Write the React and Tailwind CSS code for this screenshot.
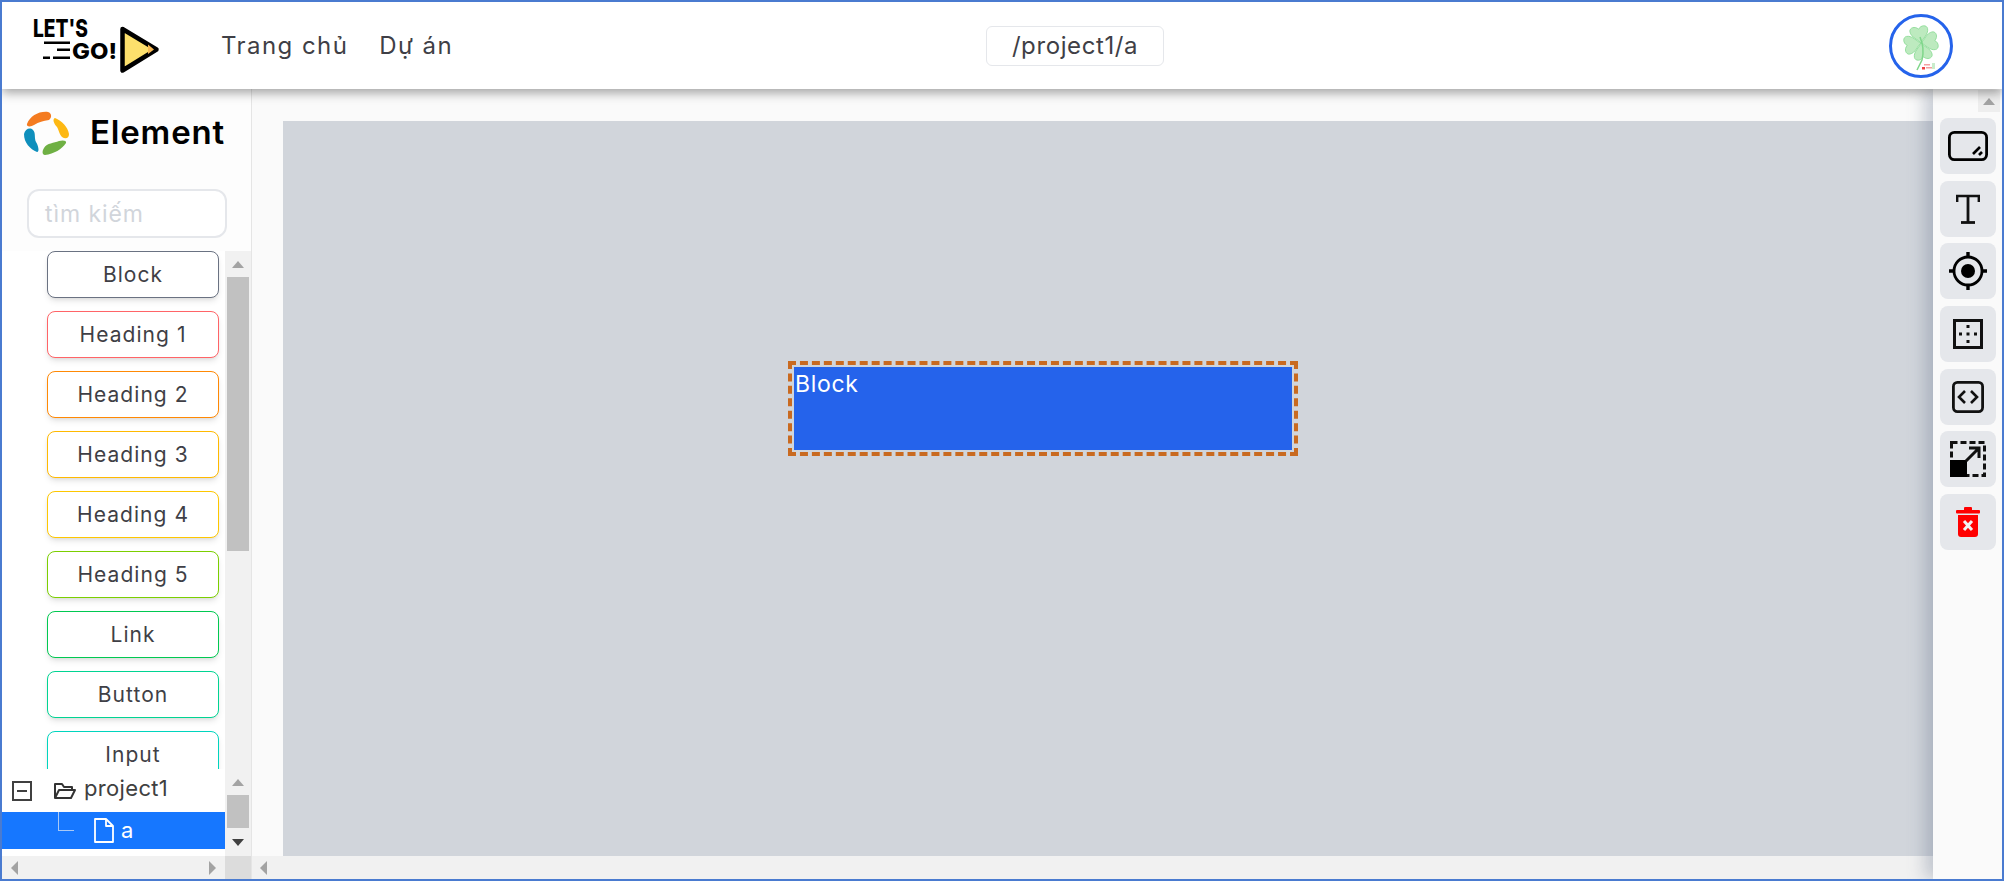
import React from 'react';

const ELEMENTS = [
  { name: 'Block', border: 'border-gray-500' },
  { name: 'Heading 1', border: 'border-red-400' },
  { name: 'Heading 2', border: 'border-orange-400' },
  { name: 'Heading 3', border: 'border-amber-400' },
  { name: 'Heading 4', border: 'border-yellow-400' },
  { name: 'Heading 5', border: 'border-lime-500' },
  { name: 'Link', border: 'border-green-500' },
  { name: 'Button', border: 'border-emerald-400' },
  { name: 'Input', border: 'border-teal-400' },
];

function Arrow({ dir, color = 'border-b-[#a3a3a3]' }) {
  if (dir === 'up') return <div className={`w-0 h-0 border-x-[6px] border-x-transparent border-b-[7px] ${color}`} />;
  if (dir === 'down') return <div className="w-0 h-0 border-x-[6px] border-x-transparent border-t-[7px] border-t-[#404040]" />;
  if (dir === 'left') return <div className="w-0 h-0 border-y-[7px] border-y-transparent border-r-[7px] border-r-[#a3a3a3]" />;
  return <div className="w-0 h-0 border-y-[7px] border-y-transparent border-l-[7px] border-l-[#a3a3a3]" />;
}

function Logo() {
  return (
    <svg width="130" height="64" viewBox="0 0 130 64" className="shrink-0">
      <text x="1" y="24.5" fontFamily="Inter, sans-serif" fontWeight="800" fontSize="24" textLength="55" lengthAdjust="spacingAndGlyphs" fill="#000">LET'S</text>
      <rect x="12" y="29.5" width="26" height="2.5" fill="#000" />
      <rect x="25" y="36.5" width="13" height="2.5" fill="#000" />
      <rect x="11" y="44.5" width="7" height="2.5" fill="#000" />
      <rect x="21" y="44.5" width="17" height="2.5" fill="#000" />
      <text x="40" y="46.5" fontFamily="Inter, sans-serif" fontWeight="800" fontSize="22" textLength="45" lengthAdjust="spacingAndGlyphs" fill="#000">GO!</text>
      <path d="M90.5 17 L124.5 37.5 L90.5 58.5 Z" fill="#fde06c" stroke="#000" strokeWidth="4.5" strokeLinejoin="round" />
      <path d="M116 32.5 L122 37.5 L116 42 Z" fill="#f7b955" />
    </svg>
  );
}

function ElementLogo() {
  return (
    <svg width="48" height="46" viewBox="0 0 48 46" className="shrink-0">
      <path d="M4 14 C7 6 16 1 25 2 C29 3 29 8 26 10 C20 11 16 12 11 15 C8 17 3 17 4 14Z" fill="#f47b20" />
      <path d="M32 8 C39 11 45 17 46 24 C46 29 42 29 39 27 C36 24 36 20 34 17 C31 14 29 9 32 8Z" fill="#fdb813" />
      <path d="M43 33 C39 39 31 44 22 45 C19 45 19 41 21 38 C24 33 31 33 36 31 C39 30 44 30 43 33Z" fill="#6fb044" />
      <path d="M14 42 C7 39 1 33 1 24 C2 19 7 17 10 20 C13 23 11 28 13 32 C15 35 17 42 14 42Z" fill="#0f8fbc" />
    </svg>
  );
}

function Clover() {
  const leaf = 'M0 0 C-2 -4 -9 -7 -9 -13 C-9 -17 -3 -18 0 -14 C3 -18 9 -17 9 -13 C9 -7 2 -4 0 0Z';
  return (
    <svg width="56" height="56" viewBox="0 0 56 56">
      <g transform="translate(28 25)" fill="#bdeabf" stroke="#8adb94" strokeWidth="0.8">
        <path d={leaf} transform="rotate(-10)" />
        <path d={leaf} transform="rotate(80)" />
        <path d={leaf} transform="rotate(170)" />
        <path d={leaf} transform="rotate(260)" />
      </g>
      <path d="M27 19 C30 26 31 34 29 42 L24 52" fill="none" stroke="#7fd68a" strokeWidth="1.5" />
      <rect x="31" y="46" width="6" height="1.5" fill="#f4a0a0" />
      <rect x="29" y="49" width="3" height="2.5" fill="#ef4444" />
      <rect x="33" y="49" width="6" height="1.5" fill="#f4a0a0" />
      <rect x="39" y="45" width="3" height="6" fill="#c9eccb" />
    </svg>
  );
}

function Tool({ children }) {
  return <button className="w-14 h-14 shrink-0 rounded-lg bg-gray-200 flex items-center justify-center">{children}</button>;
}

function ToolIcons() {
  return (
    <>
      <Tool>
        <svg width="40" height="30" viewBox="0 0 40 30" fill="none" stroke="#000">
          <rect x="1.4" y="1.4" width="37.2" height="27.2" rx="5" strokeWidth="2.8" />
          <path d="M25 23 L32 16" strokeWidth="2.6" />
          <path d="M31 24 L34 21" strokeWidth="2.6" />
        </svg>
      </Tool>
      <Tool>
        <svg width="24" height="30" viewBox="0 0 24 30" fill="none" stroke="#111" strokeWidth="2.4">
          <path d="M1.2 8 V2 H22.8 V8" />
          <path d="M12 2 V28" strokeWidth="2.8" />
          <path d="M5 28.5 H19" strokeWidth="2.8" />
        </svg>
      </Tool>
      <Tool>
        <svg width="38" height="38" viewBox="0 0 38 38" fill="none" stroke="#000">
          <circle cx="19" cy="19" r="14" strokeWidth="2.8" />
          <circle cx="19" cy="19" r="7" fill="#000" stroke="none" />
          <path d="M19 0 V6 M19 32 V38 M0 19 H6 M32 19 H38" strokeWidth="3.4" />
        </svg>
      </Tool>
      <Tool>
        <svg width="30" height="30" viewBox="0 0 30 30" fill="none">
          <rect x="1.5" y="1.5" width="27" height="27" stroke="#111" strokeWidth="3" />
          <g fill="#111">
            <rect x="13.5" y="6" width="3" height="3" />
            <rect x="13.5" y="13.5" width="3" height="3" />
            <rect x="13.5" y="21" width="3" height="3" />
            <rect x="6" y="13.5" width="3" height="3" />
            <rect x="21" y="13.5" width="3" height="3" />
          </g>
        </svg>
      </Tool>
      <Tool>
        <svg width="32" height="32" viewBox="0 0 32 32" fill="none" stroke="#111">
          <rect x="1.4" y="1.4" width="29.2" height="29.2" rx="4" strokeWidth="2.8" />
          <path d="M13 10 L7 16 L13 22 M19 10 L25 16 L19 22" strokeWidth="2.6" />
        </svg>
      </Tool>
      <Tool>
        <svg width="36" height="36" viewBox="0 0 36 36" fill="none">
          <rect x="1.5" y="1.5" width="33" height="33" stroke="#111" strokeWidth="3" strokeDasharray="6 3" />
          <rect x="0" y="19" width="17" height="17" fill="#000" />
          <path d="M16 20 L29 7 M19 7 H29 V17" stroke="#111" strokeWidth="3" />
        </svg>
      </Tool>
      <Tool>
        <svg width="24" height="30" viewBox="0 0 24 30">
          <rect x="0" y="3" width="24" height="3.5" rx="1" fill="#ff0000" />
          <rect x="8" y="0" width="8" height="4" rx="1" fill="#ff0000" />
          <path d="M2 8 H22 V27 Q22 30 19 30 H5 Q2 30 2 27 Z" fill="#ff0000" />
          <path d="M8 14 L16 23 M16 14 L8 23" stroke="#f2f2f2" strokeWidth="3" />
        </svg>
      </Tool>
    </>
  );
}

function Sidebar() {
  return (
    <aside className="w-[250px] shrink-0 flex flex-col bg-white border-r border-[#e5e5e5]">
      <div className="h-[162px] shrink-0 bg-[#fdfdfd]">
        <div className="flex items-center h-[87px] pl-[21px]">
          <ElementLogo />
          <h2 className="ml-[19px] text-[33px] font-semibold text-black tracking-[0.025em]">Element</h2>
        </div>
        <div className="ml-[25px] mt-[13px] w-[200px] h-[49px] rounded-xl border-2 border-gray-200 bg-white pl-[16px] pt-[2px] flex items-center text-[23px] text-[#d1d5db] tracking-[0.04em]">
          tìm kiếm
        </div>
      </div>
      <div className="flex-1 min-h-0 flex overflow-hidden">
        <div className="w-[223px] shrink-0 flex flex-col gap-[13px] pl-[45px] pr-[6px] overflow-hidden">
          {ELEMENTS.map((el) => (
            <button
              key={el.name}
              className={`w-[172px] h-[47px] shrink-0 rounded-lg border bg-white shadow-md text-[21px] text-[#3f3f46] tracking-[0.05em] ${el.border}`}
            >
              {el.name}
            </button>
          ))}
        </div>
        <div className="w-[26px] shrink-0 bg-[#f1f1f1] flex flex-col items-center">
          <div className="h-[26px] flex items-center justify-center"><Arrow dir="up" /></div>
          <div className="w-[22px] h-[274px] bg-[#c1c1c1]" />
        </div>
      </div>
      <div className="h-[87px] shrink-0 flex bg-white">
        <div className="w-[223px] shrink-0">
          <div className="h-[43px] flex items-center text-[22px] text-[#404040]">
            <div className="ml-[10px] w-[20px] h-[20px] border-2 border-[#404040] flex items-center justify-center">
              <div className="w-[10px] h-[2px] bg-[#404040]" />
            </div>
            <svg className="ml-[22px]" width="22" height="18" viewBox="0 0 22 18" fill="none" stroke="#333" strokeWidth="2" strokeLinejoin="round">
              <path d="M1 16 V2 H8 L10 5 H18 V8" />
              <path d="M1 16 L5 8 H21 L17 16 Z" />
            </svg>
            <span className="ml-[8px] mt-[-4px] tracking-[0.015em]">project1</span>
          </div>
          <div className="h-[37px] bg-[#1677ff] flex items-center text-[22px] text-white relative">
            <div className="absolute left-[56px] top-0 w-[16px] h-[19px] border-l border-b border-[#a9c9f5]" />
            <svg className="ml-[92px]" width="20" height="25" viewBox="0 0 20 25" fill="none" stroke="#fff" strokeWidth="1.8" strokeLinejoin="round">
              <path d="M1 1 H12 L19 8 V24 H1 Z" />
              <path d="M12 1 V8 H19" />
            </svg>
            <span className="ml-[7px]">a</span>
          </div>
        </div>
        <div className="w-[26px] shrink-0 bg-[#f1f1f1] flex flex-col items-center">
          <div className="h-[26px] flex items-center justify-center"><Arrow dir="up" /></div>
          <div className="w-[22px] h-[33px] bg-[#c1c1c1]" />
          <div className="h-[28px] flex items-center justify-center"><Arrow dir="down" /></div>
        </div>
      </div>
      <div className="h-[23px] shrink-0 flex">
        <div className="w-[223px] bg-[#f1f1f1] flex items-center justify-between px-[9px]">
          <Arrow dir="left" />
          <Arrow dir="right" />
        </div>
        <div className="w-[26px] bg-[#dcdcdc]" />
      </div>
    </aside>
  );
}

export default function App() {
  return (
    <div className="w-[2004px] h-[881px] overflow-hidden border-2 border-[#4a7bd0] flex flex-col bg-white font-[Inter,sans-serif]">
      <header className="h-[87px] shrink-0 relative z-10 bg-white shadow-[0_4px_10px_rgba(0,0,0,0.35)] flex items-center">
        <div className="ml-[30px] mt-[-4px]"><Logo /></div>
        <nav className="ml-[59px] flex items-center gap-[31px] text-[24px] text-[#3f3f46] tracking-[0.06em]">
          <a>Trang chủ</a>
          <a>Dự án</a>
        </nav>
        <div className="absolute left-[984px] top-[24px] w-[178px] h-[40px] rounded-md border border-gray-200 flex items-center justify-center text-[24px] text-[#3f3f46] tracking-[0.025em]">
          /project1/a
        </div>
        <div className="ml-auto mr-[49px] w-[64px] h-[64px] rounded-full border-[3px] border-[#2563eb] flex items-center justify-center">
          <Clover />
        </div>
      </header>
      <div className="flex-1 min-h-0 flex">
        <Sidebar />
        <main className="flex-1 min-w-0 flex flex-col bg-[#fafafa]">
          <div className="flex-1 min-h-0 pl-[31px] pt-[32px]">
            <div className="h-full bg-[#d1d5db] pl-[511px] pt-[246px]">
              <div className="w-[498px] h-[83px] bg-[#2563eb] text-white text-[23px] leading-[34px] pl-[1px] tracking-[0.03em] outline-[4px] outline-dashed outline-[#c96a20] outline-offset-2">
                Block
              </div>
            </div>
          </div>
          <div className="h-[23px] shrink-0 bg-[#f1f1f1] flex items-center pl-[8px]">
            <Arrow dir="left" />
          </div>
        </main>
        <div className="w-[69px] shrink-0 bg-[#fafafa] shadow-[-8px_0_16px_rgba(100,116,139,0.35)] relative z-[1] flex flex-col items-end pr-[6px] gap-[6.7px] pt-[29px]">
          <div className="absolute right-[2px] top-[1px] w-[22px] h-[22px] bg-[#eeeeee] flex items-center justify-center">
            <Arrow dir="up" />
          </div>
          <ToolIcons />
        </div>
      </div>
    </div>
  );
}
